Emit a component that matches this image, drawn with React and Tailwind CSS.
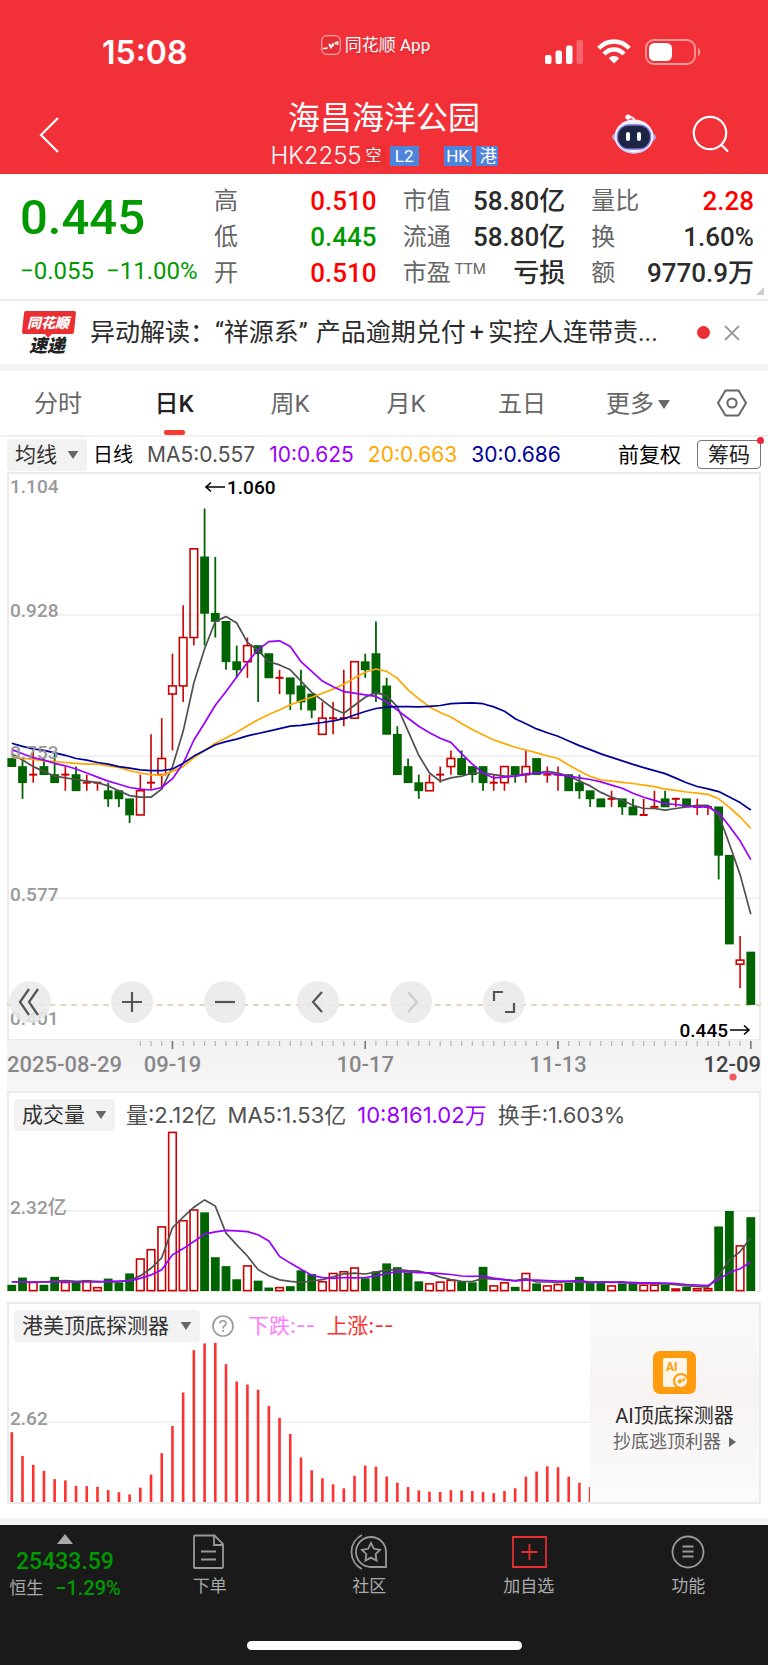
import { useState } from "react";

const UP = "#cc0000";
const DOWN = "#006400";
const STEP = 10.71;
const xAt = (i) => 4.8 + i * STEP;

// [open, close, high, low]
const candles = [
  [0.75, 0.74, 0.75, 0.74], [0.74, 0.72, 0.75, 0.7], [0.73, 0.73, 0.76, 0.72], [0.74, 0.73, 0.75, 0.73],
  [0.73, 0.72, 0.757, 0.72], [0.73, 0.73, 0.74, 0.71], [0.73, 0.71, 0.74, 0.71], [0.72, 0.72, 0.73, 0.71],
  [0.72, 0.72, 0.72, 0.71], [0.71, 0.7, 0.72, 0.69], [0.71, 0.7, 0.71, 0.69], [0.7, 0.68, 0.7, 0.67],
  [0.68, 0.71, 0.73, 0.68], [0.72, 0.72, 0.78, 0.712], [0.73, 0.75, 0.8, 0.713], [0.83, 0.84, 0.88, 0.76],
  [0.84, 0.9, 0.94, 0.82], [0.9, 1.01, 1.01, 0.89], [1.0, 0.93, 1.06, 0.89], [0.93, 0.92, 1.0, 0.9],
  [0.92, 0.87, 0.92, 0.86], [0.87, 0.86, 0.89, 0.85], [0.87, 0.89, 0.9, 0.85], [0.89, 0.88, 0.89, 0.82],
  [0.88, 0.85, 0.88, 0.85], [0.85, 0.85, 0.86, 0.83], [0.85, 0.83, 0.85, 0.81], [0.84, 0.82, 0.86, 0.81],
  [0.83, 0.81, 0.83, 0.8], [0.78, 0.8, 0.82, 0.78], [0.8, 0.8, 0.82, 0.78], [0.8, 0.8, 0.86, 0.79],
  [0.8, 0.87, 0.87, 0.8], [0.87, 0.86, 0.88, 0.85], [0.88, 0.83, 0.92, 0.82], [0.84, 0.78, 0.85, 0.78],
  [0.78, 0.73, 0.79, 0.73], [0.74, 0.72, 0.75, 0.72], [0.72, 0.71, 0.73, 0.7], [0.71, 0.72, 0.73, 0.71],
  [0.73, 0.73, 0.74, 0.72], [0.74, 0.75, 0.76, 0.73], [0.75, 0.73, 0.76, 0.73], [0.74, 0.73, 0.74, 0.72],
  [0.74, 0.72, 0.74, 0.71], [0.72, 0.72, 0.73, 0.71], [0.72, 0.74, 0.74, 0.71], [0.74, 0.73, 0.74, 0.72],
  [0.73, 0.74, 0.76, 0.72], [0.75, 0.73, 0.75, 0.73], [0.73, 0.73, 0.74, 0.72], [0.73, 0.73, 0.74, 0.71],
  [0.73, 0.71, 0.73, 0.71], [0.72, 0.71, 0.73, 0.7], [0.71, 0.7, 0.71, 0.69], [0.7, 0.69, 0.7, 0.69],
  [0.7, 0.7, 0.71, 0.69], [0.7, 0.69, 0.7, 0.68], [0.69, 0.68, 0.7, 0.68], [0.68, 0.68, 0.7, 0.68],
  [0.69, 0.69, 0.71, 0.69], [0.7, 0.69, 0.71, 0.69], [0.7, 0.7, 0.7, 0.69], [0.7, 0.69, 0.7, 0.69],
  [0.69, 0.69, 0.7, 0.68], [0.69, 0.69, 0.69, 0.68], [0.69, 0.63, 0.69, 0.6], [0.63, 0.52, 0.63, 0.52],
  [0.495, 0.5, 0.53, 0.465], [0.51, 0.445, 0.51, 0.445],
];

const volumes = [
  0.18, 0.39, 0.27, 0.18, 0.41, 0.27, 0.27, 0.32, 0.12, 0.36, 0.25, 0.51, 0.95, 1.22, 1.88, 4.62, 2.06, 2.37,
  2.28, 0.98, 0.72, 0.34, 0.75, 0.3, 0.1, 0.12, 0.14, 0.6, 0.49, 0.29, 0.53, 0.58, 0.69, 0.37, 0.57, 0.8, 0.69,
  0.53, 0.28, 0.23, 0.28, 0.33, 0.27, 0.25, 0.7, 0.17, 0.26, 0.12, 0.53, 0.22, 0.17, 0.21, 0.24, 0.41, 0.23,
  0.23, 0.17, 0.22, 0.27, 0.19, 0.19, 0.18, 0.08, 0.12, 0.09, 0.09, 1.87, 2.32, 1.33, 2.14,
];

const detector = [
  2.29, 1.51, 1.22, 1.02, 0.75, 0.71, 0.53, 0.52, 0.5, 0.39, 0.32, 0.25, 0.47, 0.9, 1.6, 2.49, 3.59, 4.98, 5.2,
  5.22, 4.52, 3.95, 3.85, 3.68, 3.15, 2.76, 2.23, 1.46, 1.04, 0.78, 0.58, 0.45, 0.86, 1.19, 1.16, 0.84, 0.63,
  0.49, 0.38, 0.34, 0.33, 0.39, 0.38, 0.36, 0.33, 0.29, 0.36, 0.45, 0.83, 1.0, 1.17, 1.14, 0.83, 0.63, 0.49,
];

// values for the days whose averaging window starts before the visible range
const lead5 = [0.756, 0.748, 0.74, 0.734];
const lead10 = [0.761, 0.756, 0.751, 0.748, 0.744, 0.741, 0.737, 0.732, 0.727];
const lead20 = [
  0.753, 0.75, 0.749, 0.747, 0.746, 0.745, 0.744, 0.743, 0.743, 0.741, 0.739, 0.735, 0.732, 0.73, 0.729, 0.734,
  0.74, 0.751, 0.76,
];
const lead30 = [
  0.769, 0.765, 0.762, 0.76, 0.757, 0.754, 0.75, 0.748, 0.745, 0.743, 0.74, 0.738, 0.736, 0.735, 0.735, 0.737,
  0.744, 0.753, 0.76, 0.767, 0.771, 0.774, 0.778, 0.781, 0.784, 0.787, 0.79, 0.791, 0.793,
];

const movingAverage = (values, n, lead) =>
  values.map((_, i) => {
    if (i < n - 1) return lead[i];
    return values.slice(i - n + 1, i + 1).reduce((a, b) => a + b, 0) / n;
  });

const toPoints = (values, y) => values.map((v, i) => `${xAt(i).toFixed(1)},${y(v).toFixed(1)}`).join(" ");

const priceY = (p) => 1 + (1.104 - p) * 806.5;
const volY = (v) => 160 - v * 34.5;
const detY = (v) => 160 - v * 30.5;

const closes = candles.map((c) => c[1]);
const priceLines = [
  { color: "#505050", values: movingAverage(closes, 5, lead5) },
  { color: "#ffa800", values: movingAverage(closes, 20, lead20) },
  { color: "#9900ff", values: movingAverage(closes, 10, lead10) },
  { color: "#000099", values: movingAverage(closes, 30, lead30) },
];
const flat = Array(9).fill(0.26);
const volumeLines = [
  { color: "#505050", values: movingAverage(volumes, 5, flat) },
  { color: "#9900ff", values: movingAverage(volumes, 10, flat) },
];

function Candle({ index, data }) {
  const [open, close, high, low] = data;
  const x = xAt(index);
  const top = priceY(Math.max(open, close));
  const bottom = priceY(Math.min(open, close));
  if (close < open) {
    return (
      <g fill={DOWN} stroke={DOWN}>
        <line x1={x} x2={x} y1={priceY(high)} y2={priceY(low)} strokeWidth="1.8" />
        <rect x={x - 4.4} y={top - 0.4} width="8.8" height={bottom - top + 0.8} stroke="none" />
      </g>
    );
  }
  return (
    <g fill="none" stroke={UP} strokeWidth="1.6">
      <line x1={x} x2={x} y1={priceY(high)} y2={top} />
      <line x1={x} x2={x} y1={bottom} y2={priceY(low)} />
      {open === close ? (
        <line x1={x - 4} x2={x + 4} y1={top} y2={top} strokeWidth="2" />
      ) : (
        <rect x={x - 3.8} y={top} width="7.6" height={bottom - top} />
      )}
    </g>
  );
}

function PriceChart() {
  return (
    <svg viewBox="2 2 750 565" className="block w-full overflow-visible" role="img" aria-label="日K">
      {[0.928, 0.753, 0.577].map((p) => (
        <line key={p} x1="2" x2="752" y1={priceY(p)} y2={priceY(p)} stroke="#e9e9e9" strokeWidth="1.2" />
      ))}
      <line x1="0" x2="754" y1="533" y2="533" stroke="#e0c6a0" strokeWidth="1.4" strokeDasharray="5.5 5.2" />
      {candles.map((c, i) => (
        <Candle key={i} index={i} data={c} />
      ))}
      {priceLines.map((l) => (
        <polyline key={l.color} points={toPoints(l.values, priceY)} fill="none" stroke={l.color} strokeWidth="1.7" strokeLinejoin="round" />
      ))}
      <g fontSize="19" fontWeight="500" fill="#999">
        <text x="3" y="21">1.104</text>
        <text x="3" y="145">0.928</text>
        <text x="3" y="287">0.753</text>
        <text x="3" y="429">0.577</text>
        <text x="3" y="553">0.401</text>
      </g>
      <g fontSize="19" fontWeight="500" fill="#000">
        <text x="220" y="22">1.060</text>
        <text x="721" y="565" textAnchor="end">0.445</text>
      </g>
      <g fill="none" stroke="#000" strokeWidth="1.6">
        <path d="M218 15H199M204 10.5L199 15L204 19.5" />
        <path d="M723 558H742M737 553.5L742 558L737 562.5" />
      </g>
    </svg>
  );
}

function DateAxis() {
  const majors = { 15: "09-19", 33: "10-17", 51: "11-13" };
  return (
    <svg viewBox="0 0 754 51" className="block w-full bg-linear-to-b from-[#f1f1f1] to-[#f7f7f7]">
      {candles.map((_, i) => {
        if (i < 12) return null;
        const major = majors[i] || i === 69;
        return (
          <line key={i} x1={xAt(i)} x2={xAt(i)} y1="1" y2={major ? 9 : 6} stroke={major ? "#777" : "#b5b5b5"} strokeWidth={major ? 1.6 : 1.2} />
        );
      })}
      <g fontSize="22" fontWeight="500" fill="#888">
        <text x="0" y="32">2025-08-29</text>
        {Object.entries(majors).map(([i, label]) => (
          <text key={i} x={xAt(Number(i))} y="32" textAnchor="middle">
            {label}
          </text>
        ))}
        <text x="754" y="32" textAnchor="end" fill="#444">12-09</text>
      </g>
      <circle cx="726" cy="37" r="3.6" fill="#f45c5c" />
    </svg>
  );
}

function VolumeChart() {
  return (
    <svg viewBox="2 0 750 160" className="block w-full overflow-visible" role="img" aria-label="成交量">
      <line x1="2" x2="752" y1="80" y2="80" stroke="#eee" strokeWidth="1.6" />
      <text x="3" y="83" fontSize="19" fontWeight="500" fill="#999">2.32亿</text>
      {volumes.map((v, i) => {
        const x = xAt(i);
        const y = volY(v);
        if (candles[i][1] < candles[i][0]) {
          return <rect key={i} x={x - 4.4} y={y} width="8.8" height={160 - y} fill={DOWN} />;
        }
        return <rect key={i} x={x - 3.8} y={y + 0.8} width="7.6" height={Math.max(158.8 - y, 1)} fill="#fff" stroke={UP} strokeWidth="1.6" />;
      })}
      {volumeLines.map((l) => (
        <polyline key={l.color} points={toPoints(l.values, volY)} fill="none" stroke={l.color} strokeWidth="1.7" />
      ))}
    </svg>
  );
}

function DetectorChart() {
  return (
    <svg viewBox="2 0 581 160" className="block w-full" role="img" aria-label="港美顶底探测器">
      <line x1="2" x2="583" y1="80" y2="80" stroke="#eee" strokeWidth="1.6" />
      <text x="3" y="83" fontSize="19" fontWeight="500" fill="#999">2.62</text>
      {detector.map((v, i) => (
        <line key={i} x1={xAt(i)} x2={xAt(i)} y1={detY(v)} y2="160" stroke="#ff3030" strokeWidth="2.6" />
      ))}
    </svg>
  );
}

function Picker({ label, options, className }) {
  return (
    <label className={`relative flex h-8 items-center rounded-sm bg-[#f2f2f2] ${className}`}>
      <select aria-label={label} className="h-full w-full appearance-none bg-transparent pl-2 text-[21px] leading-8 text-[#333] outline-none">
        {options.map((o) => (
          <option key={o}>{o}</option>
        ))}
      </select>
      <svg viewBox="0 0 12 9" className="pointer-events-none absolute right-2 h-2 w-3" fill="#666">
        <path d="M0 0h12L6 9z" />
      </svg>
    </label>
  );
}

function StatusBar() {
  return (
    <div className="flex h-[102px] items-center justify-between pr-[67px] pl-[102px] text-white">
      <span className="w-[108px] pt-1 font-['Inter'] text-[32px] leading-8 font-semibold">15:08</span>
      <div className="mb-3 flex items-center gap-1 text-[17px] leading-6 text-shadow-sm">
        <svg viewBox="0 0 20 20" className="size-5" fill="none">
          <rect x="0.7" y="0.7" width="18.6" height="18.6" rx="5" fill="#e52d35" stroke="#ffa3a3" strokeWidth="1.2" />
          <path d="M2 13.5h3l1.5-1M8 9l2 3.5 2-4v3M14.5 7v2.5M16.5 6v4" stroke="#fff" strokeWidth="1.7" />
        </svg>
        <span>同花顺 App</span>
      </div>
      <div className="flex w-[160px] items-center justify-end gap-[14px] pt-px">
        <svg viewBox="0 0 38 26" className="h-[26px] w-[38px]" fill="#fff">
          <rect x="0" y="16" width="6.5" height="9" rx="2" />
          <rect x="10.5" y="11.5" width="6.5" height="13.5" rx="2" />
          <rect x="21" y="6.5" width="6.5" height="18.5" rx="2" />
          <rect x="31.5" y="1" width="6.5" height="24" rx="2" opacity="0.25" />
        </svg>
        <svg viewBox="0 0 34 25" className="h-[25px] w-[34px]" fill="none" stroke="#fff" strokeWidth="4.4">
          <path d="M1.7 9.3C10.4 0.3 23.6 0.3 32.3 9.3" />
          <path d="M7 15C12.6 9 21.4 9 27 15" />
          <path d="M17 24.6L11.8 19.2C14.6 16.2 19.4 16.2 22.2 19.2Z" fill="#fff" stroke="none" />
        </svg>
        <svg viewBox="0 0 56 26" className="h-[26px] w-14" fill="none">
          <rect x="1" y="1" width="49" height="24" rx="8" stroke="#f99" strokeWidth="1.8" />
          <rect x="4" y="4" width="23" height="18" rx="5.5" fill="#fff" />
          <path d="M53 9v8c3-1 3-7 0-8z" fill="#f99" />
        </svg>
      </div>
    </div>
  );
}

function TitleBar() {
  return (
    <div className="flex h-[72px] items-start justify-between pr-[38px] pl-[38px] text-white">
      <button aria-label="返回" className="mt-[15px] w-[120px]">
        <svg viewBox="0 0 22 36" className="h-9 w-[22px]" fill="none" stroke="#fff" strokeWidth="2.2">
          <path d="M20 1L3 18L20 35" />
        </svg>
      </button>
      <div className="flex flex-col items-center">
        <h1 className="text-[32px] leading-8 font-normal">海昌海洋公园</h1>
        <div className="mt-[9px] flex h-[25px] items-center">
          <span className="font-['Inter'] text-2xl leading-6 font-light">HK2255</span>
          <span className="ml-1 bg-[#e92e32] pr-1 text-[16px] leading-5">空</span>
          <span className="ml-1 w-[29px] bg-[#4f84dc] text-center text-[17px] leading-5">L2</span>
          <span className="ml-[25px] w-7 bg-[#4f84dc] text-center text-[17px] leading-5">HK</span>
          <span className="ml-1 w-[22px] overflow-hidden bg-[#4f84dc] pl-1 text-[17px] leading-5">港</span>
        </div>
      </div>
      <div className="mt-3 flex w-[120px] items-center justify-end gap-9">
        <button aria-label="智能助手">
          <svg viewBox="0 0 44 40" className="h-10 w-11">
            <path d="M23 8Q22 2.5 16 2.5" fill="none" stroke="#e9e9ff" strokeWidth="2" />
            <circle cx="16" cy="3" r="2.6" fill="#fff" />
            <ellipse cx="22" cy="23" rx="22" ry="7.5" fill="#aba5ec" />
            <ellipse cx="22" cy="22.5" rx="19.5" ry="17" fill="#f0f0fb" />
            <path d="M7 32Q22 45 37 32Q32 39.5 22 39.5T7 32" fill="#c1bff0" />
            <rect x="5.5" y="11" width="33" height="24" rx="11.5" fill="#1d2544" stroke="#7774d8" strokeWidth="1.4" />
            <rect x="14" y="18" width="4" height="9" rx="2" fill="#fff" />
            <rect x="25" y="18" width="4" height="9" rx="2" fill="#fff" />
          </svg>
        </button>
        <button aria-label="搜索">
          <svg viewBox="0 0 38 38" className="size-[38px]" fill="none" stroke="#fff" strokeWidth="2.2">
            <circle cx="18" cy="18" r="16.2" />
            <path d="M29 29.5L36 36.5" />
          </svg>
        </button>
      </div>
    </div>
  );
}

function Stat({ name, sup, value, color = "text-[#2b2b2b]" }) {
  return (
    <div className="flex h-9 items-center justify-between whitespace-nowrap">
      <dt className="flex text-2xl leading-9 text-[#666]">
        {name}
        {sup && <span className="pl-1 text-[15px] leading-7">{sup}</span>}
      </dt>
      <dd className={`text-[26px] leading-9 font-medium ${color}`}>{value}</dd>
    </div>
  );
}

function Quote() {
  const red = "text-[#ff0000]";
  const green = "text-[#009900]";
  return (
    <section className="relative flex h-[127px] border-b-2 border-[#eee] pt-[9px] pr-[14px] pl-5">
      <div className={`flex-[194] whitespace-nowrap font-medium ${green}`}>
        <div className="mt-2 text-[49px] leading-[54px]">0.445</div>
        <div className="mt-3 flex gap-3 text-2xl leading-7 font-normal">
          <span>−0.055</span>
          <span>−11.00%</span>
        </div>
      </div>
      <dl className="grid flex-[540] grid-cols-3 content-start gap-x-[26px]">
        <Stat name="高" value="0.510" color={red} />
        <Stat name="市值" value="58.80亿" />
        <Stat name="量比" value="2.28" color={red} />
        <Stat name="低" value="0.445" color={green} />
        <Stat name="流通" value="58.80亿" />
        <Stat name="换" value="1.60%" />
        <Stat name="开" value="0.510" color={red} />
        <Stat name="市盈" sup="TTM" value="亏损" />
        <Stat name="额" value="9770.9万" />
      </dl>
      <svg viewBox="0 0 9 9" className="absolute right-1 bottom-1 size-2" fill="#ccc">
        <path d="M9 0v9H0z" />
      </svg>
    </section>
  );
}

function News() {
  return (
    <section className="flex h-[70px] items-center border-b-[7px] border-[#f4f4f4] pr-7 pl-[22px]">
      <svg viewBox="0 0 54 44" className="h-11 w-[54px] shrink-0 overflow-visible" fontWeight="900" fontStyle="italic">
        <path d="M4 0H52Q54 0 54 2L52 21Q52 23 50 23H30L26 27L23 23H2Q0 23 0 21L2 2Q2 0 4 0Z" fill="#ea2f33" />
        <text x="5" y="17" fontSize="14" fill="#fff">同花顺</text>
        <text x="7" y="41" fontSize="18" fill="#222">速递</text>
      </svg>
      <a href="#news" className="ml-[14px] min-w-0 flex-1 truncate text-[25px] leading-9 text-[#2b2b2b]">
        异动解读：“祥源系<span className="mr-2">”</span>产品逾期兑付<span className="mx-1">+</span>实控人连带责...
      </a>
      <span className="ml-6 size-[13px] rounded-full bg-[#ea2f33]" />
      <button aria-label="关闭" className="ml-[14px]">
        <svg viewBox="0 0 16 16" className="size-4" fill="none" stroke="#999" strokeWidth="1.8">
          <path d="M1 1L15 15M15 1L1 15" />
        </svg>
      </button>
    </section>
  );
}

const tabs = ["分时", "日K", "周K", "月K", "五日", "更多"];

function Tabs() {
  const [active, setActive] = useState("日K");
  return (
    <nav className="flex h-[66px] border-b-2 border-[#f0f0f0]">
      {tabs.map((t) => (
        <button
          key={t}
          onClick={() => setActive(t)}
          className={`flex flex-1 flex-col items-center justify-between pt-[15px] text-2xl ${active === t ? "font-medium text-[#222]" : "text-[#666]"}`}
        >
          <span className="flex items-center gap-1 leading-9">
            {t}
            {t === "更多" && (
              <svg viewBox="0 0 12 9" className="h-[9px] w-3" fill="#666">
                <path d="M0 0h12L6 9z" />
              </svg>
            )}
          </span>
          <span className={`h-[5px] w-[21px] rounded-xs ${active === t ? "bg-[#fb3a2f]" : ""}`} />
        </button>
      ))}
      <button aria-label="设置" className="flex w-[72px] items-center justify-center">
        <svg viewBox="0 0 30 28" className="h-7 w-[30px]" fill="none" stroke="#666" strokeWidth="2" strokeLinejoin="round">
          <path d="M8.5 1.5H21.5L29 14L21.5 26.5H8.5L1 14Z" />
          <circle cx="15" cy="14" r="4.6" />
        </svg>
      </button>
    </nav>
  );
}

function AverageBar() {
  return (
    <div className="flex h-[35px] items-center justify-between px-[7px] font-['Inter','Noto_Sans_CJK_SC',sans-serif] text-[21px] leading-8 whitespace-nowrap">
      <div className="flex items-center gap-[14px]">
        <div className="flex items-center gap-[6px]">
          <Picker label="指标" options={["均线", "布林"]} className="w-20" />
          <span className="text-[20px] text-black">日线</span>
        </div>
        <span className="text-[#505050]">MA5:0.557</span>
        <span className="text-[#9900ff]">10:0.625</span>
        <span className="text-[#ffa800]">20:0.663</span>
        <span className="text-[#000099]">30:0.686</span>
      </div>
      <div className="flex items-center gap-4">
        <button className="text-black">前复权</button>
        <button className="relative h-[29px] w-16 rounded-sm border border-[#777] leading-6 text-[#222]">
          筹码
          <span className="absolute -top-1 -right-1 size-[7px] rounded-full bg-[#f02038]" />
        </button>
      </div>
    </div>
  );
}

const controls = [
  { name: "收起", d: "M20 8L11 21L20 34M29 8L20 21L29 34", color: "#555" },
  { name: "放大", d: "M21 11V31M11 21H31", color: "#555" },
  { name: "缩小", d: "M11 21H31", color: "#555" },
  { name: "左移", d: "M25 11L16 21L25 31", color: "#555" },
  { name: "右移", d: "M18 11L27 21L18 31", color: "#ccc" },
  { name: "全屏", d: "M11 20V11H20M31 22V31H22", color: "#555" },
];

function ChartControls() {
  return (
    <div className="absolute bottom-4 left-0 flex gap-[51px]">
      {controls.map((c) => (
        <button key={c.name} aria-label={c.name} className="rounded-full bg-[#e9e9e9]/85 first:mr-[9px]">
          <svg viewBox="0 0 42 42" className="size-[42px]" fill="none" stroke={c.color} strokeWidth="2.2">
            <path d={c.d} />
          </svg>
        </button>
      ))}
    </div>
  );
}

function VolumePanel() {
  return (
    <section className="mx-[7px] border-2 border-b border-[#ebebeb]">
      <div className="flex h-[38px] items-end gap-[11px] pl-[5px] font-['Inter','Noto_Sans_CJK_SC',sans-serif] text-[22px] leading-8 whitespace-nowrap text-[#505050]">
        <Picker label="副图指标" options={["成交量", "成交额"]} className="w-[101px]" />
        <span>量:2.12亿</span>
        <span>MA5:1.53亿</span>
        <span className="text-[#9900ff]">10:8161.02万</span>
        <span>换手:1.603%</span>
      </div>
      <VolumeChart />
    </section>
  );
}

function DetectorPanel() {
  return (
    <section className="mx-[7px] mt-[10px] flex border-2 border-[#ebebeb]">
      <div className="min-w-0 flex-[581]">
        <div className="flex h-[38px] items-end pl-[5px] font-['Inter','Noto_Sans_CJK_SC',sans-serif] text-[21px] leading-8 whitespace-nowrap">
          <Picker label="探测指标" options={["港美顶底探测器"]} className="w-[186px]" />
          <button aria-label="说明" className="mb-[5px] ml-3">
            <svg viewBox="0 0 22 22" className="size-[22px]" fill="none" stroke="#999" strokeWidth="1.6">
              <circle cx="11" cy="11" r="10" />
              <path d="M8 8.6C8 4.8 14 4.8 14 8.4C14 10.8 11 10.6 11 13.4" />
              <path d="M11 15v2" />
            </svg>
          </button>
          <span className="ml-[14px] text-[#ff7dff]">下跌:--</span>
          <span className="ml-[11px] text-[#ff3030]">上涨:--</span>
        </div>
        <DetectorChart />
      </div>
      <a
        href="#ai"
        className="flex flex-[169] flex-col items-center bg-linear-to-b from-[#fafafa] via-[#f8f3f3] via-45% to-[#fafbfa] pt-[47px] whitespace-nowrap"
      >
        <svg viewBox="0 0 43 43" className="size-[43px]">
          <rect width="43" height="43" rx="7" fill="#ff9b0c" />
          <rect x="10" y="7" width="24" height="29" rx="2" fill="#fff6e8" />
          <text x="13" y="20" fontSize="12" fontWeight="700" fill="#ff9b0c">AI</text>
          <circle cx="28" cy="30" r="7" fill="#fff6e8" stroke="#ff9b0c" strokeWidth="2" />
          <path d="M24.5 31.5L27 29V31.5L31 28V30" fill="none" stroke="#ff9b0c" strokeWidth="1.6" />
        </svg>
        <span className="mt-2 text-[20px] leading-7 text-[#2b2b2b]">AI顶底探测器</span>
        <span className="flex items-center gap-2 text-[18px] leading-6 text-[#666]">
          抄底逃顶利器
          <svg viewBox="0 0 7 10" className="h-[10px] w-[7px]" fill="#666">
            <path d="M0 0L7 5L0 10z" />
          </svg>
        </span>
      </a>
    </section>
  );
}

const actions = [
  {
    name: "下单",
    icon: <path d="M3 1.5H22.5L31 10V33Q31 34 30 34H3Q2 34 2 33V2.5Q2 1.5 3 1.5ZM22 2V11H31M9 17.5H24M9 25.5H24" />,
  },
  {
    name: "社区",
    icon: (
      <>
        <path d="M20 3A15 15 0 0 1 35 18V33H20A15 15 0 0 1 20 3ZM11 1A19 19 0 0 0 11 35" />
        <path d="M20 9L22.9 14.8L29 15.8L24.6 20.2L25.6 26.6L20 23.6L14.4 26.6L15.4 20.2L11 15.8L17.1 14.8Z" />
      </>
    ),
  },
  { name: "加自选", red: true, icon: <path d="M2 3H35V33H2ZM18.5 10V26M10.5 18H26.5" /> },
  {
    name: "功能",
    icon: (
      <>
        <circle cx="18" cy="18" r="15.5" />
        <path d="M12.5 12.5H23.5M12.5 17.5H23.5M12.5 22.5H23.5" />
      </>
    ),
  },
];

function BottomBar() {
  return (
    <footer className="flex h-[140px] flex-col justify-between bg-[#1a1a1a] pb-[15px]">
      <div className="flex pt-2 whitespace-nowrap">
        <button className="flex w-[130px] flex-col items-center font-medium text-[#009900]">
          <svg viewBox="0 0 16 10" className="mt-px h-[10px] w-4" fill="#aaa">
            <path d="M8 0L16 10H0z" />
          </svg>
          <span className="mt-1 text-[23px] leading-7">25433.59</span>
          <span className="flex gap-3 text-[20px] leading-6">
            <span className="text-[17px] font-normal text-[#aaa]">恒生</span>−1.29%
          </span>
        </button>
        {actions.map((a) => (
          <button key={a.name} className="flex flex-1 flex-col items-center text-[17px] leading-6 text-[#aaa]">
            <svg viewBox="0 0 36 36" className="mt-px mb-1 size-9 overflow-visible" fill="none" stroke={a.red ? "#e62e2e" : "#999"} strokeWidth="1.8">
              {a.icon}
            </svg>
            {a.name}
          </button>
        ))}
      </div>
      <div className="h-[9px] w-[275px] self-center rounded-full bg-white" />
    </footer>
  );
}

export default function App() {
  return (
    <div className="bg-white font-['Roboto','Noto_Sans_CJK_SC',sans-serif]">
      <header className="bg-[#f23038]">
        <StatusBar />
        <TitleBar />
      </header>
      <Quote />
      <News />
      <Tabs />
      <main>
        <AverageBar />
        <div className="relative mx-[7px] border-2 border-b border-[#ebebeb]">
          <PriceChart />
          <ChartControls />
        </div>
        <div className="mx-[7px]">
          <DateAxis />
        </div>
        <VolumePanel />
        <DetectorPanel />
      </main>
      <div className="mt-[14px] h-[7px] bg-[#f4f4f4]" />
      <BottomBar />
    </div>
  );
}
